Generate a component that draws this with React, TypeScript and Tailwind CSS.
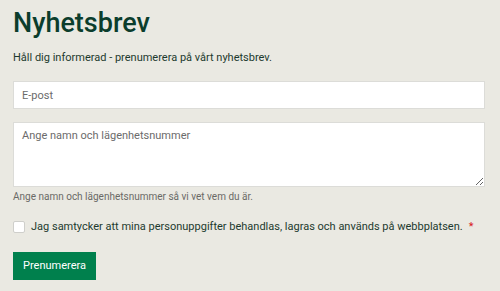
export default function App() {
  return (
    <div className="min-h-[291px] w-[500px] bg-[#eae9e2] px-[13px] pt-[7px] font-['Roboto',sans-serif] text-[#1d3a2e]">
      <h1 className="text-[27px] font-medium leading-[32px] text-[#0b3d2c]">Nyhetsbrev</h1>
      <p className="mt-[11px] text-[11px] leading-[16px]">Håll dig informerad - prenumerera på vårt nyhetsbrev.</p>
      <form className="mt-[15px] flex flex-col" onSubmit={e => e.preventDefault()}>
        <input
          type="email"
          placeholder="E-post"
          className="h-[28px] w-[472px] border border-[#dcdcd8] bg-white px-[8px] text-[11px] outline-none placeholder:text-[#6b6b6b]"
        />
        <textarea
          placeholder="Ange namn och lägenhetsnummer"
          className="mt-[13px] h-[65px] w-[472px] border border-[#dcdcd8] bg-white px-[8px] py-[5px] text-[11px] outline-none placeholder:text-[#6b6b6b]"
        />
        <p className="mt-[3px] text-[10px] leading-[14px] text-[#6a6a66]">
          Ange namn och lägenhetsnummer så vi vet vem du är.
        </p>
        <label className="mt-[15px] flex items-center gap-[6px] text-[11px] leading-[16px]">
          <input type="checkbox" className="h-[12px] w-[12px] appearance-none rounded-[2px] border border-[#cfcfcb] bg-white" />
          <span>Jag samtycker att mina personuppgifter behandlas, lagras och används på webbplatsen.</span>
          <span className="text-[#d81b1b]">*</span>
        </label>
        <button
          type="submit"
          className="mt-[17px] h-[28px] w-[83px] bg-[#00804d] text-[11px] text-white"
        >
          Prenumerera
        </button>
      </form>
    </div>
  )
}
